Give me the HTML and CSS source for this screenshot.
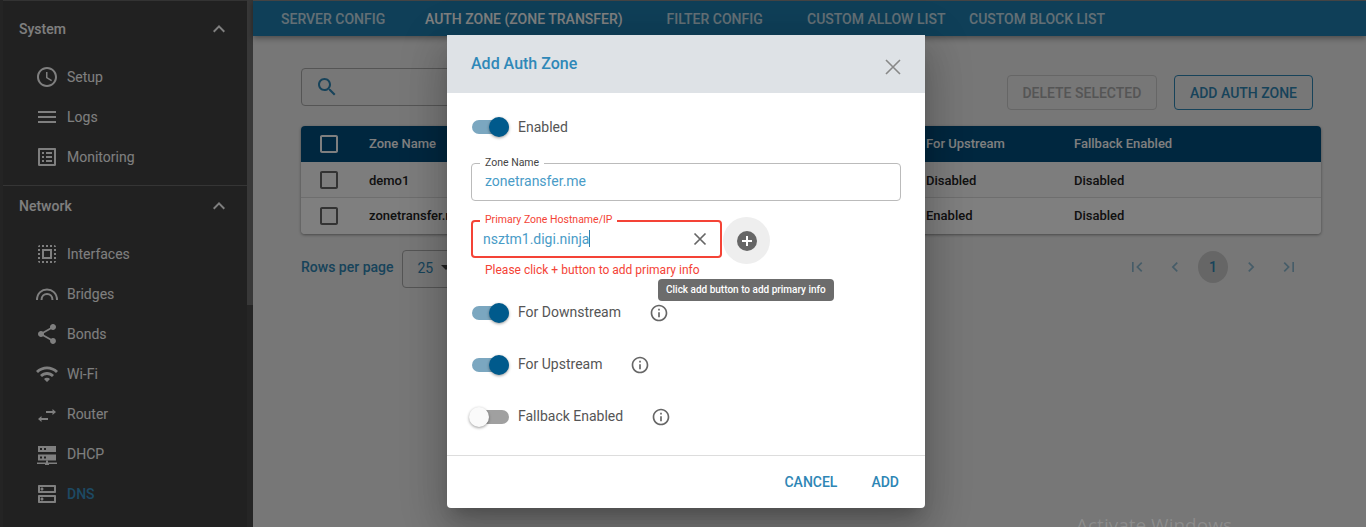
FILE: index.html
```html
<!DOCTYPE html>
<html>

<head>
	<title>Add Auth Zone</title>
	<meta charset="utf-8">
	<link rel="stylesheet" href="styles.css">
</head>

<body>
	<svg class="sprites" width="0" height="0">
		<symbol id="i-up" viewBox="0 0 24 24"><path d="M12 8l-6 6 1.41 1.41L12 10.83l4.59 4.58L18 14z"/></symbol>
		<symbol id="i-clock" viewBox="0 0 24 24"><path d="M11.99 2C6.47 2 2 6.48 2 12s4.47 10 9.99 10C17.52 22 22 17.52 22 12S17.52 2 11.99 2zM12 20c-4.42 0-8-3.58-8-8s3.58-8 8-8 8 3.58 8 8-3.58 8-8 8zm.5-13H11v6l5.25 3.15.75-1.23-4.5-2.67z"/></symbol>
		<symbol id="i-menu" viewBox="0 0 24 24"><path d="M3 18h18v-2H3v2zm0-5h18v-2H3v2zm0-7v2h18V6H3z"/></symbol>
		<symbol id="i-list" viewBox="0 0 24 24"><path d="M19 5v14H5V5h14m1.1-2H3.9c-.5 0-.9.4-.9.9v16.2c0 .4.4.9.9.9h16.2c.4 0 .9-.5.9-.9V3.9c0-.5-.5-.9-.9-.9zM11 7h6v2h-6V7zm0 4h6v2h-6v-2zm0 4h6v2h-6zM7 7h2v2H7zm0 4h2v2H7zm0 4h2v2H7z"/></symbol>
		<symbol id="i-select" viewBox="0 0 24 24"><path d="M3 5h2V3c-1.1 0-2 .9-2 2zm0 8h2v-2H3v2zm4 8h2v-2H7v2zM3 9h2V7H3v2zm10-6h-2v2h2V3zm6 0v2h2c0-1.1-.9-2-2-2zM5 21v-2H3c0 1.1.9 2 2 2zm-2-4h2v-2H3v2zM9 3H7v2h2V3zm2 18h2v-2h-2v2zm8-8h2v-2h-2v2zm0 8c1.1 0 2-.9 2-2h-2v2zm0-12h2V7h-2v2zm0 8h2v-2h-2v2zm-4 4h2v-2h-2v2zm0-16h2V3h-2v2zM7 17h10V7H7v10zm2-8h6v6H9V9z"/></symbol>
		<symbol id="i-share" viewBox="0 0 24 24"><path d="M18 16.08c-.76 0-1.44.3-1.96.77L8.91 12.7c.05-.23.09-.46.09-.7s-.04-.47-.09-.7l7.05-4.11c.54.5 1.25.81 2.04.81 1.66 0 3-1.34 3-3s-1.34-3-3-3-3 1.34-3 3c0 .24.04.47.09.7L8.04 9.81C7.5 9.31 6.79 9 6 9c-1.66 0-3 1.34-3 3s1.34 3 3 3c.79 0 1.5-.31 2.04-.81l7.12 4.16c-.05.21-.08.43-.08.65 0 1.61 1.31 2.92 2.92 2.92 1.61 0 2.92-1.31 2.92-2.92s-1.31-2.92-2.92-2.92z"/></symbol>
		<symbol id="i-wifi" viewBox="0 0 24 24"><path d="M1 9l2 2c4.97-4.97 13.03-4.97 18 0l2-2C16.93 2.93 7.08 2.93 1 9zm8 8l3 3 3-3c-1.65-1.66-4.34-1.66-6 0zm-4-4l2 2c2.76-2.76 7.24-2.76 10 0l2-2C15.14 9.14 8.87 9.14 5 13z"/></symbol>
		<symbol id="i-swap" viewBox="0 0 24 24"><path d="M21 10l-3.500-3v2H11v2h6.500v2zM3 17l3.500-3v2H13v2H6.500v2z"/></symbol>
		<symbol id="i-dhcp" viewBox="0 0 24 24"><path fill-rule="evenodd" d="M3 4h18v6H3zM5 6v2h2V6zM9 6v2h2V6zM3 12.500h18v6H3zM5 14.500v2h2v-2zM9 14.500v2h2v-2z"/><path d="M11 18.500h2v2h9v1.500h-8v1h-4v-1H2v-1.500h9z"/></symbol>
		<symbol id="i-bridge" viewBox="0 0 24 24"><path d="M2 18C2 4 22 4 22 18M6.500 18c0-8 11-8 11 0" fill="none" stroke="currentColor" stroke-width="2"/></symbol>
		<symbol id="i-dns" viewBox="0 0 24 24"><path d="M19 15v4H5v-4h14m1-2H4c-.55 0-1 .45-1 1v6c0 .55.45 1 1 1h16c.55 0 1-.45 1-1v-6c0-.55-.45-1-1-1zM7 18.5c-.82 0-1.5-.67-1.5-1.5s.68-1.5 1.5-1.5 1.5.67 1.5 1.5-.67 1.5-1.5 1.5zM19 5v4H5V5h14m1-2H4c-.55 0-1 .45-1 1v6c0 .55.45 1 1 1h16c.55 0 1-.45 1-1V4c0-.55-.45-1-1-1zM7 8.5c-.82 0-1.5-.67-1.5-1.5S6.18 5.5 7 5.5s1.5.68 1.5 1.5S7.83 8.5 7 8.5z"/></symbol>
		<symbol id="i-info" viewBox="0 0 24 24"><path d="M11 7h2v2h-2zm0 4h2v6h-2zm1-9C6.48 2 2 6.48 2 12s4.48 10 10 10 10-4.48 10-10S17.52 2 12 2zm0 18c-4.41 0-8-3.59-8-8s3.59-8 8-8 8 3.59 8 8-3.59 8-8 8z"/></symbol>
		<symbol id="i-close" viewBox="0 0 24 24"><path d="M5 5l14 14M19 5L5 19" fill="none" stroke="currentColor" stroke-width="1.600"/></symbol>
		<symbol id="i-clear" viewBox="0 0 24 24"><path d="M6.500 6.500l11 11M17.500 6.500l-11 11" fill="none" stroke="currentColor" stroke-width="1.700"/></symbol>
		<symbol id="i-box" viewBox="0 0 24 24"><path d="M19 5v14H5V5h14m0-2H5c-1.1 0-2 .9-2 2v14c0 1.1.9 2 2 2h14c1.1 0 2-.9 2-2V5c0-1.1-.9-2-2-2z"/></symbol>
	</svg>

	<div class="page">
		<aside class="sidebar">
			<div class="nav-scroll">
				<div class="nav-head"><span>System</span><svg class="chevron"><use href="#i-up"/></svg></div>
				<div class="nav-group">
					<a class="nav-item"><svg class="nav-icon"><use href="#i-clock"/></svg>Setup</a>
					<a class="nav-item"><svg class="nav-icon"><use href="#i-menu"/></svg>Logs</a>
					<a class="nav-item"><svg class="nav-icon"><use href="#i-list"/></svg>Monitoring</a>
				</div>
				<div class="nav-line"></div>
				<div class="nav-head nav-head-net"><span>Network</span><svg class="chevron"><use href="#i-up"/></svg></div>
				<div class="nav-group nav-group-net">
					<a class="nav-item"><svg class="nav-icon"><use href="#i-select"/></svg>Interfaces</a>
					<a class="nav-item"><svg class="nav-icon"><use href="#i-bridge"/></svg>Bridges</a>
					<a class="nav-item"><svg class="nav-icon"><use href="#i-share"/></svg>Bonds</a>
					<a class="nav-item"><svg class="nav-icon"><use href="#i-wifi"/></svg>Wi-Fi</a>
					<a class="nav-item"><svg class="nav-icon"><use href="#i-swap"/></svg>Router</a>
					<a class="nav-item"><svg class="nav-icon"><use href="#i-dhcp"/></svg>DHCP</a>
					<a class="nav-item nav-active"><svg class="nav-icon"><use href="#i-dns"/></svg>DNS</a>
				</div>
			</div>
			<div class="scrollbar"><div class="scrollbar-thumb"></div></div>
		</aside>

		<main class="main">
			<nav class="tabs">
				<a class="tab tab-server">SERVER CONFIG</a>
				<a class="tab tab-auth">AUTH ZONE (ZONE TRANSFER)</a>
				<a class="tab tab-filter">FILTER CONFIG</a>
				<a class="tab tab-allow">CUSTOM ALLOW LIST</a>
				<a class="tab">CUSTOM BLOCK LIST</a>
			</nav>

			<div class="content">
				<div class="toolbar">
					<div class="search">
						<svg class="search-icon" viewBox="0 0 24 24"><path d="M15.5 14h-.79l-.28-.27C15.41 12.59 16 11.11 16 9.500 16 5.910 13.090 3 9.500 3S3 5.910 3 9.500 5.910 16 9.500 16c1.610 0 3.090-.59 4.230-1.570l.27.28v.79l5 4.990L20.490 19l-4.990-5zm-6 0C7.010 14 5 11.990 5 9.500S7.010 5 9.500 5 14 7.010 14 9.500 11.990 14 9.500 14z"/></svg>
					</div>
					<div class="actions">
						<button class="btn btn-off">DELETE SELECTED</button>
						<button class="btn btn-add">ADD AUTH ZONE</button>
					</div>
				</div>

				<div class="table">
					<div class="row row-head">
						<svg class="check"><use href="#i-box"/></svg>
						<span>Zone Name</span><span>For Upstream</span><span>Fallback Enabled</span>
					</div>
					<div class="row row-a">
						<svg class="check"><use href="#i-box"/></svg>
						<span>demo1</span><span>Disabled</span><span>Disabled</span>
					</div>
					<div class="row row-b">
						<svg class="check"><use href="#i-box"/></svg>
						<span>zonetransfer.me</span><span>Enabled</span><span>Disabled</span>
					</div>
				</div>

				<div class="pager">
					<div class="rows-per">
						<span class="rows-label">Rows per page</span>
						<div class="rows-select">25<i class="caret"></i></div>
					</div>
					<div class="pages">
						<svg class="page-icon" viewBox="0 0 24 24"><path d="M18.410 16.590L13.820 12l4.590-4.590L17 6l-6 6 6 6zM6 6h2v12H6z"/></svg>
						<svg class="page-icon" viewBox="0 0 24 24"><path d="M15.410 7.410L14 6l-6 6 6 6 1.410-1.410L10.830 12z"/></svg>
						<span class="page-num">1</span>
						<svg class="page-icon" viewBox="0 0 24 24"><path d="M10 6L8.590 7.410 13.170 12l-4.580 4.590L10 18l6-6z"/></svg>
						<svg class="page-icon" viewBox="0 0 24 24"><path d="M5.590 7.410L10.180 12l-4.590 4.590L7 18l6-6-6-6zM16 6h2v12h-2z"/></svg>
					</div>
				</div>
			</div>
		</main>
	</div>

	<div class="overlay">
		<section class="modal">
			<header class="modal-head">
				<h2>Add Auth Zone</h2>
				<svg class="modal-close"><use href="#i-close"/></svg>
			</header>

			<div class="modal-body">
				<div class="switch-row switch-first">
					<span class="switch switch-on"></span><span>Enabled</span>
				</div>

				<div class="field field-name">
					<label>Zone Name</label>
					<span class="field-value">zonetransfer.me</span>
				</div>

				<div class="primary-row">
					<div class="field field-error">
						<label>Primary Zone Hostname/IP</label>
						<span class="field-value">nsztm1.digi.ninja<i class="cursor"></i></span>
						<svg class="field-clear"><use href="#i-clear"/></svg>
					</div>
					<div class="add-round">
						<svg class="add-icon" viewBox="0 0 20 20"><circle cx="10" cy="10" r="10" fill="#666"/><path d="M9 5h2v4h4v2h-4v4H9v-4H5V9h4z" fill="#fff"/></svg>
					</div>
				</div>
				<p class="field-help">Please click + button to add primary info</p>
				<div class="tooltip">Click add button to add primary info</div>

				<div class="switch-row switch-down">
					<span class="switch switch-on"></span><span class="switch-label">For Downstream</span>
					<svg class="info"><use href="#i-info"/></svg>
				</div>
				<div class="switch-row">
					<span class="switch switch-on"></span><span class="switch-label">For Upstream</span>
					<svg class="info"><use href="#i-info"/></svg>
				</div>
				<div class="switch-row">
					<span class="switch"></span><span class="switch-label">Fallback Enabled</span>
					<svg class="info"><use href="#i-info"/></svg>
				</div>
			</div>

			<footer class="modal-foot">
				<button class="text-btn">CANCEL</button>
				<button class="text-btn">ADD</button>
			</footer>
		</section>
	</div>

	<div class="watermark">Activate Windows</div>
</body>
</html>
```

FILE: styles.css
```css
html, body {
    height: 100%;
}

body {
    margin: 0;
    overflow: hidden;
    font-family: Roboto, "Liberation Sans", sans-serif;
    font-size: 14px;
    color: #333;
}

.sprites {
    position: absolute;
}

svg {
    fill: currentColor;
}

.page {
    display: flex;
    height: 100%;
    background: #eee;
}

/* sidebar */
.sidebar {
    display: flex;
    flex: 0 0 253px;
    box-sizing: border-box;
    height: 100%;
    padding-left: 3px;
    background: #484848;
    overflow: hidden;
}

.nav-scroll {
    flex: 1;
    padding-top: 4px;
    background: #434343;
    border-top: 1px solid #666;
}

.nav-head {
    display: flex;
    align-items: center;
    justify-content: space-between;
    height: 48px;
    padding: 0 16px;
    font-weight: 500;
    color: #fff;
}

.nav-head-net {
    height: 39px;
}

.chevron {
    width: 24px;
    height: 24px;
    color: #fff;
}

.nav-group {
    margin-top: 4px;
}

.nav-group-net {
    margin-top: 9px;
}

.nav-item {
    display: flex;
    align-items: center;
    gap: 8px;
    height: 40px;
    padding-left: 32px;
    color: #fff;
}

.nav-icon {
    width: 24px;
    height: 24px;
    color: #fff;
}

.nav-active {
    font-weight: 500;
    color: #3a94c8;
}

.nav-line {
    height: 1px;
    margin-top: 8px;
    background: #6a6a6a;
}

.scrollbar {
    flex: 0 0 6px;
    background: #4a4a4a;
}

.scrollbar-thumb {
    height: 305px;
    background: #707070;
}

/* main part */
.main {
    flex: 1;
    min-width: 0;
}

.tabs {
    display: flex;
    align-items: center;
    box-sizing: border-box;
    height: 36px;
    padding-left: 28px;
    background: #1e7eb0;
    border-top: 1px solid #888;
    box-shadow: 0 2px 6px rgba(0, 0, 0, .4);
    font-weight: 500;
    color: #fff;
}

.tab {
    white-space: nowrap;
    opacity: .75;
}

.tab-server {
    width: 144px;
}

.tab-auth {
    width: 241.500px;
    opacity: 1;
}

.tab-filter {
    width: 140.500px;
}

.tab-allow {
    width: 162px;
}

.content {
    padding: 32px 45px 0 48px;
}

.toolbar {
    display: flex;
    justify-content: space-between;
    height: 58px;
}

.search {
    box-sizing: border-box;
    display: flex;
    align-items: center;
    width: 300px;
    height: 38px;
    padding-left: 13px;
    border: 1px solid #aaa;
    border-radius: 4px;
}

.search-icon {
    width: 24px;
    height: 24px;
    color: #2e86b5;
}

.actions {
    display: flex;
    gap: 17px;
    margin: 7px 8px 0 0;
}

.btn {
    height: 35px;
    padding: 0 15px;
    background: none;
    border: 1px solid;
    border-radius: 4px;
    font: 500 14px Roboto, sans-serif;
}

.btn-off {
    width: 150px;
    padding: 0;
    border-color: #ccc;
    color: #aaa;
}

.btn-add {
    border-color: #2e86b5;
    color: #2e86b5;
}

.table {
    border-radius: 4px;
    overflow: hidden;
    box-shadow: 0 1px 3px rgba(0, 0, 0, .4);
}

.row {
    display: grid;
    grid-template-columns: 68px 557px 148px 1fr;
    align-items: center;
    box-sizing: border-box;
    height: 36px;
    font-size: 13px;
    font-weight: 500;
    color: #222;
}

.row-head {
    padding-bottom: 2px;
    background: #004e7e;
    color: #fff;
}

.row-head .check {
    margin-top: 2px;
    color: #fff;
}

.row-a {
    padding-top: 1px;
    background: #fafafa;
    border-bottom: 1px solid #ddd;
}

.row-b {
    padding-bottom: 1px;
    background: #fff;
}

.check {
    width: 24px;
    height: 24px;
    margin-left: 16px;
    color: #666;
}

.pager {
    display: flex;
    justify-content: space-between;
    align-items: center;
    margin-top: 16px;
    height: 38px;
}

.rows-per {
    display: flex;
    align-items: center;
    gap: 9px;
    font-weight: 500;
    color: #2e86b5;
}

.rows-label {
    margin-bottom: 4px;
}

.rows-select {
    display: flex;
    align-items: center;
    box-sizing: border-box;
    width: 100px;
    height: 38px;
    padding: 0 0 3px 14px;
    gap: 8px;
    border: 1px solid #aaa;
    border-radius: 4px;
    font-weight: 400;
}

.caret {
    border: 5px solid transparent;
    border-top-color: #444;
    border-bottom: 0;
}

.pages {
    display: flex;
    align-items: center;
    gap: 8px;
    margin: 0 17px 4px 0;
    color: #2e86b5;
}

.page-icon {
    width: 20px;
    height: 20px;
    margin: 0 5px;
    opacity: .5;
}

.page-num {
    width: 30px;
    height: 32px;
    line-height: 32px;
    border-radius: 50%;
    background: #ccc;
    text-align: center;
    font-weight: 500;
}

/* dialog */
.overlay {
    position: absolute;
    top: 0;
    left: 0;
    right: 0;
    bottom: 0;
    box-sizing: border-box;
    padding: 35px 0 0 447px;
    background: rgba(0, 0, 0, .5);
}

.modal {
    width: 478px;
    height: 473px;
    display: flex;
    flex-direction: column;
    background: #fff;
    border-radius: 4px;
    box-shadow: 0 11px 15px -7px rgba(0, 0, 0, .2), 0 24px 38px 3px rgba(0, 0, 0, .14), 0 9px 46px 8px rgba(0, 0, 0, .12);
}

.modal-head {
    display: flex;
    align-items: center;
    justify-content: space-between;
    flex: 0 0 58px;
    padding: 0 20px 0 24px;
    background: #dee2e6;
}

.modal-head h2 {
    margin: 0 0 2px;
    font-size: 16px;
    font-weight: 500;
    color: #2f88b8;
}

.modal-close {
    width: 24px;
    height: 24px;
    margin-top: 6px;
    color: #888;
}

.modal-body {
    position: relative;
    flex: 1;
    padding: 0 24px;
}

.switch-row {
    display: flex;
    align-items: center;
    height: 52px;
    color: #555;
}

.switch-label {
    margin-bottom: 2px;
}

.switch-first {
    height: 20px;
    margin: 24px 0 26px;
}

.switch-down {
    margin-top: 10px;
}

.switch {
    position: relative;
    flex: 0 0 37px;
    height: 14px;
    margin: 0 9px 0 1px;
    border-radius: 7px;
    background: #a0a0a0;
}

.switch::after {
    content: "";
    position: absolute;
    left: -3px;
    top: -3px;
    width: 20px;
    height: 20px;
    border-radius: 50%;
    background: #fafafa;
    box-shadow: 0 1px 3px rgba(0, 0, 0, .4);
}

.switch-on {
    background: #7ba7c0;
}

.switch-on::after {
    left: auto;
    right: 0;
    background: #005a8c;
}

.field {
    position: relative;
    display: flex;
    align-items: center;
    box-sizing: border-box;
    height: 38px;
    padding: 0 0 2px 13px;
    border: 1px solid #bbb;
    border-radius: 4px;
}

.field label {
    position: absolute;
    left: 8px;
    top: -7px;
    padding: 0 5px;
    background: #fff;
    font-size: 10.500px;
    line-height: 12px;
    color: #444;
}

.field-value {
    font-size: 14px;
    color: #4a9cc7;
}

.primary-row {
    display: flex;
    margin-top: 19px;
    height: 38px;
}

.field-error {
    flex: 0 0 251px;
    padding: 0 0 1px 10px;
    border: 2px solid #f44336;
}

.field-error label {
    left: 7px;
    top: -8px;
    color: #f44336;
}

.cursor {
    display: inline-block;
    width: 1px;
    height: 17px;
    background: #2e7fae;
    vertical-align: -3px;
}

.field-clear {
    position: absolute;
    right: 8px;
    width: 24px;
    height: 24px;
    color: #666;
}

.add-round {
    display: flex;
    align-items: center;
    justify-content: center;
    flex: 0 0 47px;
    height: 47px;
    margin: -3px 0 0 1px;
    border-radius: 50%;
    background: #eee;
}

.add-icon {
    width: 20px;
    height: 20px;
}

.field-help {
    margin: 5px 0 0 14px;
    font-size: 12px;
    line-height: 14px;
    color: #f44336;
}

.tooltip {
    position: absolute;
    left: 211px;
    top: 186px;
    padding: 0 8px;
    height: 22px;
    line-height: 22px;
    border-radius: 4px;
    background: #6c6c6c;
    font-size: 10px;
    font-weight: 500;
    color: #fff;
    white-space: nowrap;
}

.info {
    width: 20px;
    height: 20px;
    margin-left: 28px;
    color: #666;
}

.modal-foot {
    display: flex;
    justify-content: flex-end;
    align-items: center;
    gap: 34px;
    flex: 0 0 52px;
    padding-right: 26px;
    border-top: 1px solid #ddd;
}

.text-btn {
    padding: 0;
    background: none;
    border: 0;
    font: 500 14px Roboto, sans-serif;
    color: #2e86b5;
}

.watermark {
    position: absolute;
    left: 1076px;
    top: 512px;
    font-family: "Open Sans", sans-serif;
    font-size: 19px;
    color: rgba(255, 255, 255, .16);
    white-space: nowrap;
}
```
